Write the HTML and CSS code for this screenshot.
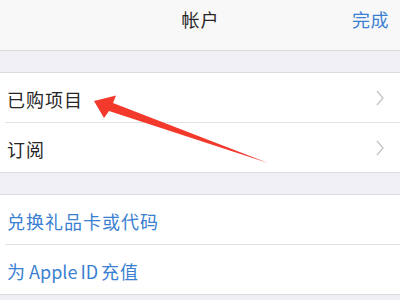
FILE: index.html
```html
<!DOCTYPE html>
<html lang="zh">
<head>
<meta charset="utf-8">
<link rel="stylesheet" href="styles.css">
</head>
<body>
<div class="screen">
  <header class="nav">
    <span class="nav-side"></span>
    <span class="nav-title">帐户</span>
    <span class="nav-side nav-done">完成</span>
  </header>
  <div class="spacer"></div>
  <section class="group">
    <div class="row">
      <span class="label">已购项目</span>
      <svg class="chev" width="8" height="16" viewBox="0 0 8 16"><path d="M1 1 L7 8 L1 15" fill="none" stroke="#c4c4c8" stroke-width="1.3"/></svg>
    </div>
    <div class="row">
      <span class="label">订阅</span>
      <svg class="chev" width="8" height="16" viewBox="0 0 8 16"><path d="M1 1 L7 8 L1 15" fill="none" stroke="#c4c4c8" stroke-width="1.3"/></svg>
    </div>
  </section>
  <div class="spacer"></div>
  <section class="group">
    <div class="row">
      <span class="label link">兑换礼品卡或代码</span>
    </div>
    <div class="row">
      <span class="label link">为<span class="latin"> Apple ID </span>充值</span>
    </div>
  </section>
  <svg class="arrow" width="400" height="300" viewBox="0 0 400 300">
    <polygon points="94,101 116,95.5 113,103 268,163 109,111 104,118" fill="#f2392c"/>
  </svg>
</div>
</body>
</html>
```

FILE: styles.css
```css
html, body {
  margin: 0;
  padding: 0;
}
body {
  background: #efeff4;
  font-family: "Noto Sans CJK SC", "Liberation Sans", sans-serif;
}
.screen {
  position: relative;
  width: 400px;
  height: 300px;
  overflow: hidden;
  background: #efeff4;
}
.nav {
  box-sizing: border-box;
  height: 51px;
  background: #f8f8f8;
  border-bottom: 1px solid #d9d9dc;
  display: grid;
  grid-template-columns: 1fr auto 1fr;
  align-items: start;
  padding: 4px 11px 0 12px;
}
.nav-title {
  font-size: 18px;
  color: #262626;
  letter-spacing: 1px;
  line-height: 30px;
}
.nav-done {
  text-align: right;
  font-size: 18px;
  color: #3a80d2;
  letter-spacing: 0.5px;
  line-height: 30px;
}
.spacer {
  height: 21px;
}
.group {
  background: #ffffff;
  border-top: 1px solid #dcdce0;
  border-bottom: 1px solid #dcdce0;
}
.row {
  height: 49px;
  display: flex;
  align-items: center;
  justify-content: space-between;
  padding: 0 16px 0 7px;
}
.row + .row {
  border-top: 1px solid #e2e2e5;
  margin-left: 5px;
  padding-left: 2px;
}
.label {
  font-size: 18px;
  letter-spacing: 1px;
  color: #262626;
  line-height: 24px;
  padding-top: 3px;
}
.link {
  color: #3a80d2;
}
.latin {
  letter-spacing: 0;
  word-spacing: -1px;
}
.chev {
  display: block;
}
.arrow {
  position: absolute;
  left: 0;
  top: 0;
  pointer-events: none;
}
```
